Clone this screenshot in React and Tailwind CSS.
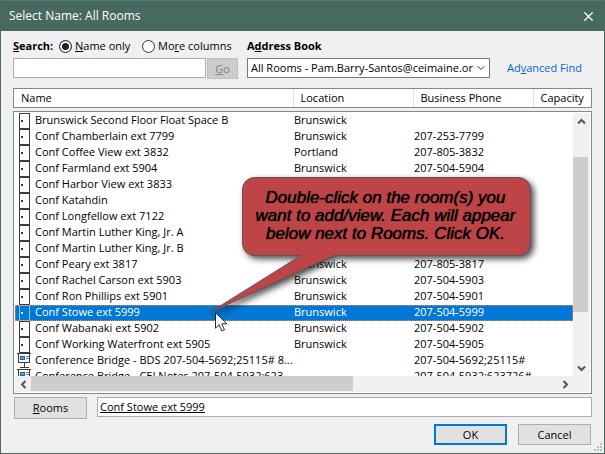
import { useState } from 'react'
import { X, ChevronDown } from 'lucide-react'

const rooms = [
  { name: 'Brunswick Second Floor Float Space B', location: 'Brunswick', phone: '', type: 'room' },
  { name: 'Conf Chamberlain ext 7799', location: 'Brunswick', phone: '207-253-7799', type: 'room' },
  { name: 'Conf Coffee View ext 3832', location: 'Portland', phone: '207-805-3832', type: 'room' },
  { name: 'Conf Farmland ext 5904', location: 'Brunswick', phone: '207-504-5904', type: 'room' },
  { name: 'Conf Harbor View ext 3833', location: '', phone: '', type: 'room' },
  { name: 'Conf Katahdin', location: '', phone: '', type: 'room' },
  { name: 'Conf Longfellow ext 7122', location: '', phone: '', type: 'room' },
  { name: 'Conf Martin Luther King, Jr. A', location: '', phone: '', type: 'room' },
  { name: 'Conf Martin Luther King, Jr. B', location: '', phone: '', type: 'room' },
  { name: 'Conf Peary ext 3817', location: 'Brunswick', phone: '207-805-3817', type: 'room' },
  { name: 'Conf Rachel Carson ext 5903', location: 'Brunswick', phone: '207-504-5903', type: 'room' },
  { name: 'Conf Ron Phillips ext 5901', location: 'Brunswick', phone: '207-504-5901', type: 'room' },
  { name: 'Conf Stowe ext 5999', location: 'Brunswick', phone: '207-504-5999', type: 'room' },
  { name: 'Conf Wabanaki ext 5902', location: 'Brunswick', phone: '207-504-5902', type: 'room' },
  { name: 'Conf Working Waterfront ext 5905', location: 'Brunswick', phone: '207-504-5905', type: 'room' },
  { name: 'Conference Bridge - BDS 207-504-5692;25115# 8...', location: '', phone: '207-504-5692;25115#', type: 'bridge' },
  { name: 'Conference Bridge - CEI Notes 207-504-5932;623...', location: '', phone: '207-504-5932;623726#', type: 'bridge' }
]

function RoomIcon({ selected }) {
  return (
    <svg width="16" height="16" viewBox="0 0 16 16" className="shrink-0" shapeRendering="crispEdges">
      <rect x="3.5" y="0.5" width="10" height="15" fill={selected ? '#0078d7' : '#fcfcfc'} stroke={selected ? '#8fc3ee' : '#3b3b3b'} />
      <rect x="5" y="7" width="2" height="2" fill={selected ? '#dcecf9' : '#3b3b3b'} />
    </svg>
  )
}

function BridgeIcon() {
  return (
    <svg width="16" height="16" viewBox="0 0 16 16" className="shrink-0" shapeRendering="crispEdges">
      <rect x="2.5" y="0.5" width="11" height="9" fill="#fcfcfc" stroke="#3b3b3b" />
      <path d="M1 0.5h14M8 10v4M4 14.5h9" stroke="#3b3b3b" fill="none" />
      <rect x="4.5" y="3.5" width="4" height="3" fill="#4da3e8" stroke="#1767ab" />
      <path d="M10 3.5h3M10 5.5h3" stroke="#777" />
    </svg>
  )
}

function ScrollArrow({ label, d }) {
  return (
    <button aria-label={label} className="w-4 h-4 shrink-0 flex items-center justify-center">
      <svg width="9" height="9" viewBox="0 0 9 9" fill="none" stroke="#555" strokeWidth="2">
        <path d={d} />
      </svg>
    </button>
  )
}

function Columns({ last }) {
  return (
    <colgroup>
      <col />
      <col className="w-[120px]" />
      <col className="w-[120px]" />
      <col className={last} />
    </colgroup>
  )
}

function Callout() {
  return (
    <div className="absolute left-[193px] top-[65px] w-[325px] h-[140px] pointer-events-none">
      <svg width="325" height="140" viewBox="0 0 325 140" className="absolute inset-0 overflow-visible drop-shadow-[3px_3px_3px_rgba(0,0,0,0.7)]">
        <path
          d="M47.500 .5h264a12 12 0 0 1 12 12v54a12 12 0 0 1-12 12H127L2 136L94 78.500H47.500a12 12 0 0 1-12-12v-54a12 12 0 0 1 12-12Z"
          fill="#bd4447"
          stroke="#5b5657"
        />
      </svg>
      <p className="relative ml-8 pt-3 text-center font-['Liberation_Sans',sans-serif] font-normal italic text-[17px] leading-[18px] text-black [text-shadow:0_0_1px_#000]">
        Double-click on the room(s) you<br />
        want to add/view. Each will appear<br />
        below next to Rooms. Click OK.
      </p>
      <svg width="13" height="20" viewBox="0 0 13 20" className="absolute left-2 top-[135px]">
        <path d="M.5 .8v15.400l3.700-3.500 2.600 6.200 2.600-1.100-2.600-6h5.100Z" fill="#fff" stroke="#111" strokeWidth=".9" />
      </svg>
    </div>
  )
}

export default function App() {
  const [mode, setMode] = useState('name')
  const [selected, setSelected] = useState('Conf Stowe ext 5999')

  const radioClass = 'appearance-none w-[13px] h-[13px] rounded-full border border-[#333] bg-white checked:bg-[#222] checked:shadow-[inset_0_0_0_2px_#fff]'

  return (
    <div className="h-screen flex flex-col bg-[#f0f0f0] border border-t-0 border-[#48695f] font-['Open_Sans','Noto_Sans',sans-serif] text-[11px] leading-4 text-black">
      <header className="h-[31px] shrink-0 flex items-center justify-between pl-2 pr-2 bg-[#48695f] border-t border-[#567a6f] text-[12px] text-white">
        <h1>Select Name: All Rooms</h1>
        <button aria-label="Close"><X size={15} strokeWidth={2} /></button>
      </header>

      <main className="relative flex-1 min-h-0 flex flex-col px-3 pt-[5px] pb-2">
        <div className="flex items-start">
          <div className="w-[225px] shrink-0">
            <div className="h-[22px] pb-0.5 flex items-center">
              <label htmlFor="search" className="font-bold w-[46px]"><u>S</u>earch:</label>
              <label className="flex items-center gap-[3px] w-[83px] whitespace-nowrap">
                <input type="radio" name="mode" className={radioClass} checked={mode === 'name'} onChange={() => setMode('name')} />
                <span><u>N</u>ame only</span>
              </label>
              <label className="flex items-center gap-[3px] whitespace-nowrap">
                <input type="radio" name="mode" className={radioClass} checked={mode === 'more'} onChange={() => setMode('more')} />
                <span>Mo<u>r</u>e columns</span>
              </label>
            </div>
            <div className="flex items-start gap-px">
              <input id="search" type="text" className="flex-1 min-w-0 h-5 px-1 bg-white border border-[#abadb3]" />
              <button disabled className="w-[31px] h-[21px] bg-[#cccccc] border border-[#bfbfbf] text-[#838383]"><u>G</u>o</button>
            </div>
          </div>

          <div className="w-[243px] shrink-0 ml-[9px]">
            <div className="h-[22px] pb-0.5 flex items-center">
              <label htmlFor="book" className="font-bold">A<u>d</u>dress Book</label>
            </div>
            <div className="relative">
              <select id="book" className="appearance-none block w-full h-5 pl-[3px] pr-4 bg-white border border-[#7a7a7a] whitespace-nowrap overflow-hidden">
                <option>All Rooms - Pam.Barry-Santos@ceimaine.org</option>
              </select>
              <ChevronDown size={12} strokeWidth={2} className="absolute right-[3px] top-1 text-[#333] pointer-events-none" />
            </div>
          </div>

          <a href="#advanced" className="ml-[17px] mt-6 whitespace-nowrap text-[#0066cc]">Ad<u>v</u>anced Find</a>
        </div>

        <div className="shrink-0 h-5 mt-[9px] bg-white border border-[#828790]">
          <table className="w-full table-fixed border-collapse" aria-label="Columns">
            <Columns last="w-[58px]" />
            <thead>
              <tr className="text-left">
                <th className="h-[18px] p-0 pl-[7px] font-normal border-r border-[#e0e0e0]">Name</th>
                <th className="h-[18px] p-0 pl-[7px] font-normal border-r border-[#e0e0e0]">Location</th>
                <th className="h-[18px] p-0 pl-[7px] font-normal border-r border-[#e0e0e0]">Business Phone</th>
                <th className="h-[18px] p-0 pl-[7px] font-normal">Capacity</th>
              </tr>
            </thead>
          </table>
        </div>

        <div className="relative flex-1 min-h-0 mt-[3px] flex flex-col p-px bg-white border border-[#828790]">
          <div className="flex-1 min-h-0 flex">
            <div className="flex-1 min-w-0 overflow-hidden">
              <table className="w-full table-fixed border-collapse leading-[14px]" aria-label="Rooms">
                <Columns last="w-10" />
                <tbody>
                  {rooms.map(room => {
                    const active = room.name === selected
                    return (
                      <tr
                        key={room.name}
                        onClick={() => setSelected(room.name)}
                        className={active ? 'align-top bg-[#0078d7] text-white outline-1 outline-dotted outline-[#ff8728] -outline-offset-1' : 'align-top'}
                      >
                        <td className="h-4 p-0 pl-px">
                          <div className="flex items-start gap-[3px]">
                            {room.type === 'room' ? <RoomIcon selected={active} /> : <BridgeIcon />}
                            <span className="whitespace-nowrap">{room.name}</span>
                          </div>
                        </td>
                        <td className="p-0 pl-px">{room.location}</td>
                        <td className="p-0 pl-px whitespace-nowrap">{room.phone}</td>
                        <td className="p-0"></td>
                      </tr>
                    )
                  })}
                </tbody>
              </table>
            </div>
            <div className="w-[17px] shrink-0 flex flex-col bg-[#f0f0f0]">
              <ScrollArrow label="Scroll up" d="M1 6.500l3.500-3.500L8 6.500" />
              <div className="flex-[28]" />
              <div className="flex-[155] w-[15px] bg-[#cdcdcd]" />
              <div className="flex-[48]" />
              <ScrollArrow label="Scroll down" d="M1 2.500l3.500 3.500L8 2.500" />
            </div>
          </div>
          <div className="h-4 shrink-0 flex pr-[17px] bg-[#f0f0f0]">
            <ScrollArrow label="Scroll left" d="M6.500 1l-3.500 3.500L6.500 8" />
            <div className="flex-[322] h-[15px] bg-[#cdcdcd]" />
            <div className="flex-[204]" />
            <ScrollArrow label="Scroll right" d="M2.500 1l3.500 3.500L2.500 8" />
          </div>
          <Callout />
        </div>

        <div className="shrink-0 mt-[3px] flex items-start gap-[10px]">
          <button className="w-[73px] h-[22px] ml-px bg-[#e1e1e1] border border-[#adadad]"><u>R</u>ooms</button>
          <input aria-label="Rooms" readOnly value={selected} className="flex-1 min-w-0 h-5 px-0.5 pb-0.5 bg-white border border-[#abadb3] underline" />
        </div>

        <div className="shrink-0 mt-[5px] mr-px flex justify-end gap-[11px]">
          <button className="w-[73px] h-[21px] leading-4 bg-[#e1e1e1] border-2 border-[#0078d7]">OK</button>
          <button className="w-[73px] h-[21px] leading-4 bg-[#e1e1e1] border border-[#adadad]">Cancel</button>
        </div>

        <svg width="9" height="9" viewBox="0 0 9 9" className="absolute right-px bottom-px" fill="#bfbfbf">
          <path d="M6 0h2v2h-2zM3 3h2v2h-2zM6 3h2v2h-2zM0 6h2v2h-2zM3 6h2v2h-2zM6 6h2v2h-2z" />
        </svg>
      </main>
    </div>
  )
}
